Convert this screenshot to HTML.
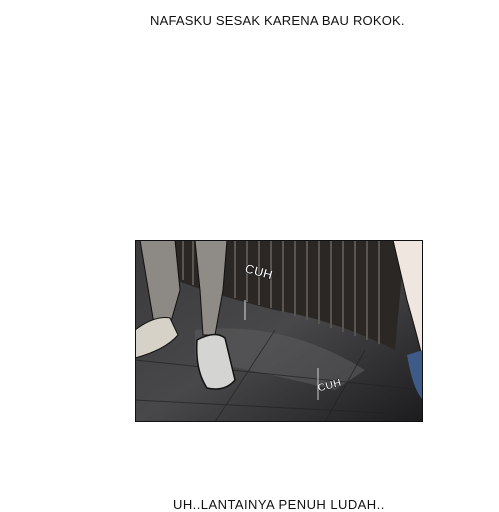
<!DOCTYPE html>
<html><head><style>
html,body{margin:0;padding:0;background:#fff;width:499px;height:512px;overflow:hidden;position:relative;font-family:"Liberation Sans",sans-serif}
.t{position:absolute;font-size:13px;color:#111;white-space:nowrap}
</style></head><body>
<div class="t" style="left:150px;top:13px;letter-spacing:0.2px">NAFASKU SESAK KARENA BAU ROKOK.</div>
<div class="t" style="left:173px;top:497px;letter-spacing:0.45px">UH..LANTAINYA PENUH LUDAH..</div>
<svg style="position:absolute;left:135px;top:240px" width="288" height="182" viewBox="0 0 288 182">
<defs>
<linearGradient id="fl" x1="0" y1="0" x2="1" y2="1"><stop offset="0" stop-color="#3a3a3c"/><stop offset="0.5" stop-color="#48484a"/><stop offset="1" stop-color="#1c1c1e"/></linearGradient>
</defs>
<rect width="288" height="182" fill="url(#fl)"/>
<g fill="#2a2724">
<path d="M40 0 H270 L260 110 Q200 80 140 70 Q80 55 40 40Z"/>
</g>
<g stroke="#5a5550" stroke-width="2">
<line x1="48" y1="0" x2="48" y2="40"/><line x1="58" y1="0" x2="58" y2="45"/><line x1="68" y1="0" x2="68" y2="50"/>
<line x1="100" y1="0" x2="100" y2="58"/><line x1="112" y1="0" x2="112" y2="62"/><line x1="124" y1="0" x2="124" y2="65"/>
<line x1="136" y1="0" x2="136" y2="68"/><line x1="148" y1="0" x2="148" y2="72"/><line x1="160" y1="0" x2="160" y2="76"/>
<line x1="172" y1="0" x2="172" y2="80"/><line x1="184" y1="0" x2="184" y2="84"/><line x1="196" y1="0" x2="196" y2="88"/>
<line x1="208" y1="0" x2="208" y2="92"/><line x1="220" y1="0" x2="220" y2="96"/><line x1="232" y1="0" x2="232" y2="100"/>
<line x1="244" y1="0" x2="244" y2="104"/>
</g>
<path d="M60 90 Q150 80 230 130 L200 150 Q120 130 60 120Z" fill="#5a5a5c" opacity="0.6"/>
<g stroke="#222" stroke-width="1" fill="none" opacity="0.7">
<path d="M0 120 L288 150"/><path d="M0 160 L288 175"/><path d="M80 182 L140 90"/><path d="M190 182 L230 110"/>
</g>
<path d="M5 0 H40 L45 50 L35 85 L20 90 Z" fill="#8d8a86" stroke="#111"/>
<path d="M60 0 H92 L88 50 L80 95 L68 95 L65 50Z" fill="#8f8c88" stroke="#111"/>
<path d="M0 90 Q20 75 35 78 L43 95 Q30 110 0 118Z" fill="#d6d2c8" stroke="#111"/>
<path d="M62 100 Q80 90 90 98 L100 140 Q90 152 72 148 Q60 130 62 100Z" fill="#d4d4d2" stroke="#111" stroke-width="1.5"/>
<path d="M258 0 H288 V120 Q282 95 272 60Z" fill="#efe6e0" stroke="#111"/>
<path d="M272 115 L288 110 V160 Q278 150 272 115Z" fill="#3e5a86"/>
<text x="110" y="35" font-size="13" fill="#fff" stroke="#111" stroke-width="0.6" transform="rotate(15 120 30)" font-family="Liberation Sans" font-weight="bold">CUH</text>
<text x="183" y="150" font-size="11" fill="#fff" stroke="#111" stroke-width="0.5" transform="rotate(-15 190 148)" font-family="Liberation Sans" font-weight="bold">CUH</text>
<line x1="110" y1="60" x2="110" y2="80" stroke="#ddd"/><line x1="183" y1="128" x2="183" y2="160" stroke="#ccc"/>
<rect x="0.5" y="0.5" width="287" height="181" fill="none" stroke="#111"/>
</svg>
</body></html>
